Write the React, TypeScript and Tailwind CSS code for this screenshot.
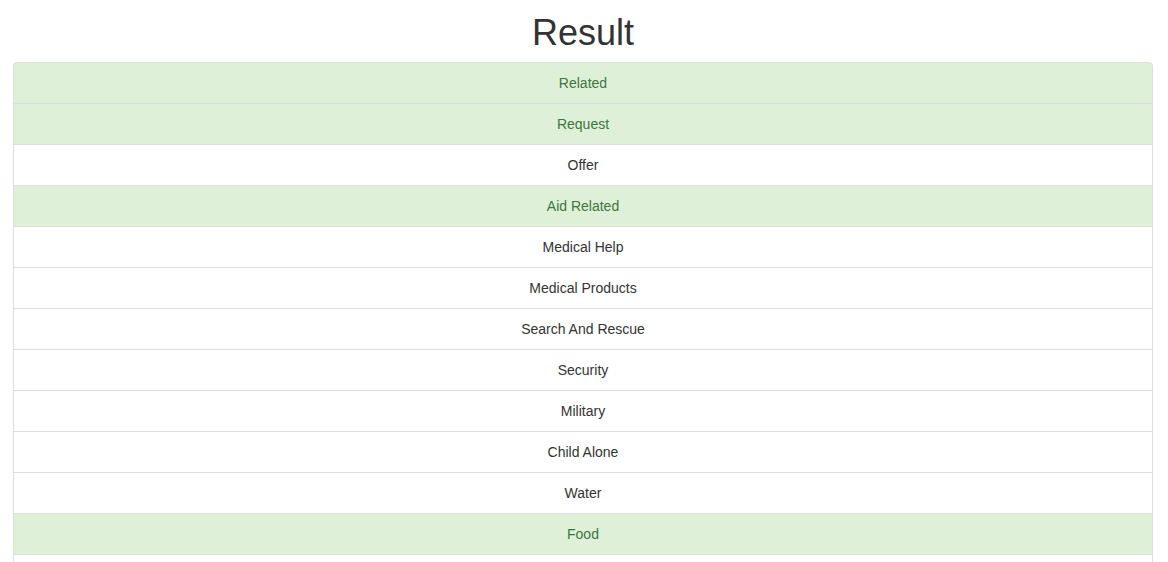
const categories: { label: string; hit: boolean }[] = [
  { label: "Related", hit: true },
  { label: "Request", hit: true },
  { label: "Offer", hit: false },
  { label: "Aid Related", hit: true },
  { label: "Medical Help", hit: false },
  { label: "Medical Products", hit: false },
  { label: "Search And Rescue", hit: false },
  { label: "Security", hit: false },
  { label: "Military", hit: false },
  { label: "Child Alone", hit: false },
  { label: "Water", hit: false },
  { label: "Food", hit: true },
  { label: "Shelter", hit: false },
  { label: "Clothing", hit: false },
];

export default function App() {
  return (
    <div
      className="bg-white pl-[13px] pr-[15px] text-[14px] leading-[20px] text-[#333333]"
      style={{ fontFamily: '"Liberation Sans", Arial, sans-serif' }}
    >
      <h1 className="pt-[13px] pb-[9px] text-center text-[36px] leading-[40px] font-normal text-[#333333]">
        Result
      </h1>
      <ul className="flex flex-col">
        {categories.map((c, i) => (
          <li
            key={c.label}
            className={`-mb-px border border-[#dddddd] px-[15px] py-[10px] text-center ${
              i === 0 ? "rounded-t-[4px]" : ""
            } ${c.hit ? "bg-[#dff0d8] text-[#3c763d]" : "bg-white text-[#333333]"}`}
          >
            {c.label}
          </li>
        ))}
      </ul>
    </div>
  );
}
